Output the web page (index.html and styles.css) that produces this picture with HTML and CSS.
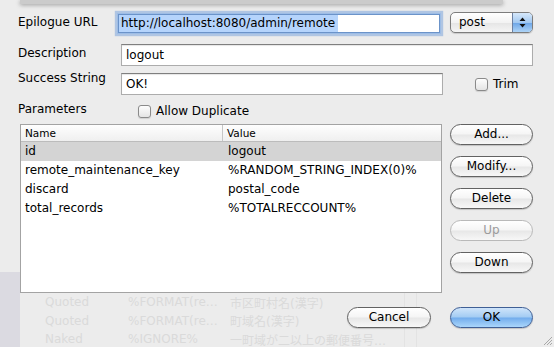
FILE: index.html
```html
<!DOCTYPE html>
<html>
<head>
<meta charset="utf-8">
<link rel="stylesheet" href="styles.css">
</head>
<body>
<div class="backdrop">
  <div class="ghost-bottom">
    <div class="g-side"></div>
    <div class="g-table">
      <div class="g-row"><span class="g-c1">Quoted</span><span class="g-c2">%FORMAT(re…</span><span class="g-c3">市区町村名(漢字)</span></div>
      <div class="g-row"><span class="g-c1">Quoted</span><span class="g-c2">%FORMAT(re…</span><span class="g-c3">町域名(漢字)</span></div>
      <div class="g-row"><span class="g-c1">Naked</span><span class="g-c2">%IGNORE%</span><span class="g-c3">一町域が二以上の郵便番号…</span></div>
    </div>
    <div class="g-lines"></div>
  </div>
</div>

<div class="sheet">
  <div class="topshade"></div>
  <div class="form">
    <div class="row r1">
      <div class="label l1">Epilogue URL</div>
      <div class="url"><span class="sel">http://localhost:8080/admin/remote</span></div>
      <div class="popup">
        <span class="popup-text">post</span>
        <span class="popup-arrows">
          <svg width="7" height="11" viewBox="0 0 7 11"><path d="M3.5 0.5 L6.5 4 L0.5 4 Z M3.5 10.5 L6.5 7 L0.5 7 Z" fill="#111"/></svg>
        </span>
      </div>
    </div>
    <div class="row r2">
      <div class="label l2">Description</div>
      <div class="field desc">logout</div>
    </div>
    <div class="row r3">
      <div class="label l3">Success String</div>
      <div class="field">OK!</div>
      <div class="check trim"><span class="cb"></span><span>Trim</span></div>
    </div>
    <div class="row r4">
      <div class="label l4">Parameters</div>
      <div class="check dup"><span class="cb"></span><span>Allow Duplicate</span></div>
    </div>
    <div class="row r5">
      <div class="table">
        <div class="thead"><div class="th th1">Name</div><div class="th th2">Value</div></div>
        <div class="tr selrow"><div class="td1">id</div><div class="td2">logout</div></div>
        <div class="tr"><div class="td1">remote_maintenance_key</div><div class="td2">%RANDOM_STRING_INDEX(0)%</div></div>
        <div class="tr"><div class="td1">discard</div><div class="td2">postal_code</div></div>
        <div class="tr"><div class="td1">total_records</div><div class="td2">%TOTALRECCOUNT%</div></div>
      </div>
      <div class="btns">
        <div class="btn">Add...</div>
        <div class="btn">Modify...</div>
        <div class="btn">Delete</div>
        <div class="btn disabled">Up</div>
        <div class="btn">Down</div>
      </div>
    </div>
    <div class="row r6">
      <div class="btn cancel">Cancel</div>
      <div class="btn ok">OK</div>
    </div>
  </div>
  <svg class="grip" width="12" height="12" viewBox="0 0 12 12"><path d="M11 3 L3 11 M11 6 L6 11 M11 9 L9 11" stroke="#a8a8a8" stroke-width="1"/></svg>
</div>
</body>
</html>
```

FILE: styles.css
```css
* { box-sizing: border-box; }
html, body { margin: 0; }
body {
  width: 554px;
  height: 347px;
  overflow: hidden;
  position: relative;
  background: #ececec;
  font-family: "DejaVu Sans", "Noto Sans CJK JP", sans-serif;
  font-size: 12px;
  color: #000;
}

/* ghost parent window seen through the sheet */
.backdrop {
  position: absolute;
  inset: 0;
  z-index: 0;
  display: flex;
  flex-direction: column;
}
.ghost-bottom {
  margin-top: auto;
  height: 75px;
  display: flex;
}
.g-side { width: 20px; background: #dbdae1; }
.g-table {
  width: 385px;
  padding-top: 21px;
  color: #dadada;
  border-right: 1px solid #e3e3e3;
}
.g-row { height: 18.5px; display: flex; align-items: center; white-space: nowrap; }
.g-c1 { margin-left: 25px; width: 83px; }
.g-c2 { width: 102px; }
.g-lines { width: 12px; border-right: 1px solid #e3e3e3; }

/* the sheet */
.sheet {
  position: relative;
  z-index: 1;
  height: 100%;
  display: flex;
  flex-direction: column;
}
.topshade {
  height: 4px;
  margin: 0 51px 0 20px;
  background: #cbcbcb;
  box-shadow: 0 1px 4px rgba(0, 0, 0, 0.35);
}
.form { padding-left: 18px; display: flex; flex-direction: column; }
.row {
  display: grid;
  grid-template-columns: 96px 322px 83px;
  column-gap: 7px;
}
.r1 { margin-top: 8px; height: 22px; }
.r2 { margin-top: 10px; height: 22px; }
.r3 { margin-top: 7px; height: 22px; }
.r4 { margin-top: 8px; height: 14px; }
.r5 { margin-top: 7px; height: 169px; }
.r6 { margin-top: 14px; height: 20px; }

.label { line-height: 15px; white-space: nowrap; }
.l1 { padding-top: 3px; }
.l2 { padding-top: 2px; }
.l3 { margin-top: -2px; }
.l4 { margin-top: -1px; }

.url {
  grid-column: 2;
  margin: 2px 3px 1px -3px;
  height: 19px;
  border: 1px solid #6b93c9;
  box-shadow: 0 0 0 1px #9dbde6, 0 0 1px 3px rgba(125, 165, 220, 0.55);
  background: #fff;
  line-height: 17px;
  display: flex;
  white-space: nowrap;
}
.sel { background: #b5d4fc; padding: 0 3px 0 2px; }

.popup {
  grid-column: 3;
  height: 21px;
  border: 1px solid #7d7d7d;
  border-radius: 5px;
  background: linear-gradient(#ffffff, #f3f3f3 50%, #e6e6e6 55%, #f5f5f5);
  display: flex;
  overflow: hidden;
  box-shadow: 0 1px 1px rgba(0, 0, 0, 0.15);
}
.popup-text { flex: 1; padding-left: 8px; line-height: 19px; }
.popup-arrows {
  width: 20px;
  border-left: 1px solid #6c80a2;
  background: linear-gradient(#d6e8fb, #a3c9f1 50%, #70a8e8 55%, #aed4f7);
  display: flex;
  align-items: center;
  justify-content: center;
}

.field {
  grid-column: 2;
  border: 1px solid #acacac;
  border-top-color: #7f7f7f;
  background: #fff;
  box-shadow: inset 0 1px 1px rgba(0, 0, 0, 0.1);
  padding-left: 4px;
  line-height: 20px;
}
.desc { grid-column: 2 / 4; }

.check { display: flex; align-items: center; gap: 5px; align-self: start; white-space: nowrap; }
.cb {
  width: 13px;
  height: 13px;
  border: 1px solid #8a8a8a;
  border-radius: 3px;
  background: linear-gradient(#fdfdfd, #e4e4e4);
  box-shadow: 0 1px 1px rgba(0, 0, 0, 0.12);
}
.trim { grid-column: 3; margin: 4px 0 0 25px; }
.dup { grid-column: 2; margin: 1px 0 0 17px; }

.table {
  grid-column: 1 / 3;
  margin: 0 1px 0 2px;
  border: 1px solid #a3a3a3;
  background: #fff;
}
.thead {
  display: flex;
  height: 17px;
  background: linear-gradient(#fefefe, #efefef);
  border-bottom: 1px solid #bcbcbc;
  font-size: 10.5px;
  line-height: 16px;
}
.th1 { width: 202px; padding-left: 4px; border-right: 1px solid #c6c6c6; }
.th2 { padding-left: 4px; }
.tr { display: flex; height: 19px; line-height: 19px; white-space: nowrap; }
.selrow { background: #d4d4d4; }
.td1 { width: 202px; padding-left: 4px; }
.td2 { padding-left: 5px; }

.btns { grid-column: 3; display: flex; flex-direction: column; gap: 11px; }
.btn {
  height: 21px;
  border-radius: 11px;
  border: 1px solid #626262;
  background: linear-gradient(#ffffff, #f5f5f5 48%, #e7e7e7 52%, #f7f7f7);
  box-shadow: 0 1px 1px rgba(0, 0, 0, 0.18);
  text-align: center;
  line-height: 19px;
}
.btn.disabled { border-color: #b9b9b9; color: #9b9b9b; box-shadow: none; }
.cancel { grid-column: 2; justify-self: end; width: 84px; margin-right: 12px; }
.ok {
  grid-column: 3;
  border-color: #3f5f95;
  background: linear-gradient(#cfe4fa, #a3ccf3 48%, #72acec 52%, #aad6fb);
}

.grip { position: absolute; right: 1px; bottom: 1px; }
```
